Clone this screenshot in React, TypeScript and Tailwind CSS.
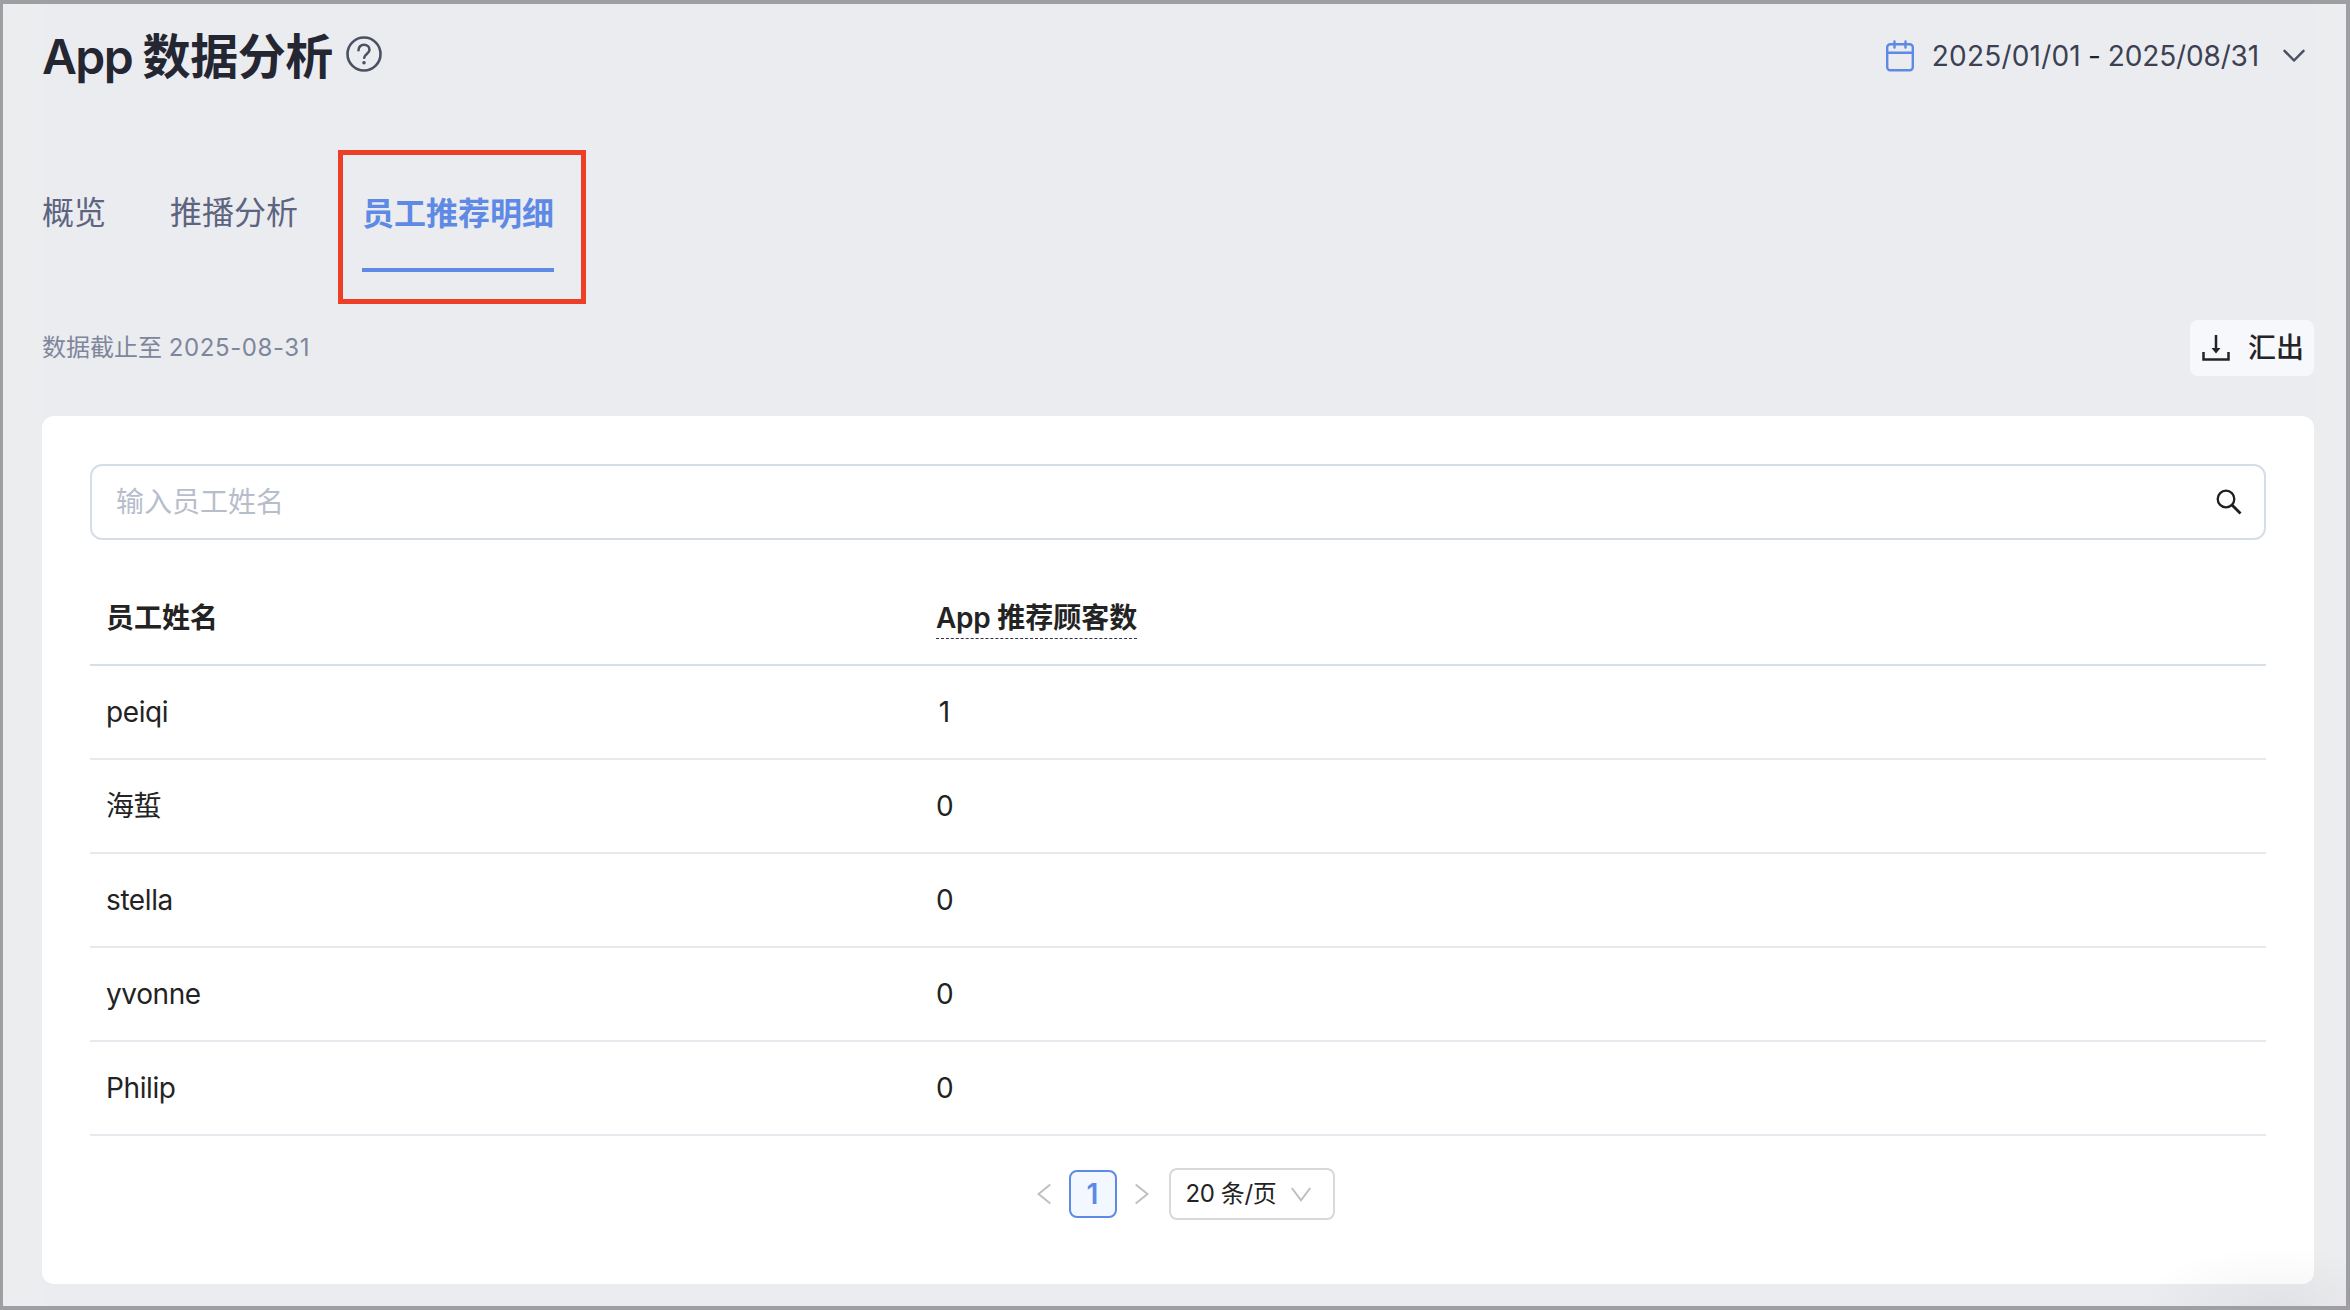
import * as React from 'react'

type Employee = {
  name: string
  customers: number
}

const tabs = ['概览', '推播分析', '员工推荐明细']

const employees: Employee[] = [
  { name: 'peiqi', customers: 1 },
  { name: '海蜇', customers: 0 },
  { name: 'stella', customers: 0 },
  { name: 'yvonne', customers: 0 },
  { name: 'Philip', customers: 0 },
]

function HelpIcon() {
  return (
    <svg className="mb-[4px]" width="36" height="40" viewBox="0 0 36 40" fill="none" stroke="#4a5163" strokeWidth="2.6" strokeLinecap="round">
      <circle cx="18" cy="20" r="16.5" />
      <path d="M12.5 16.2c0-3.2 2.4-5.4 5.5-5.4s5.5 2.1 5.5 5c0 4-5.3 4.2-5.3 8" />
      <circle cx="18" cy="28.7" r="1.8" fill="#4a5163" stroke="none" />
    </svg>
  )
}

function CalendarIcon() {
  return (
    <svg width="28" height="32" viewBox="0 0 28 32" fill="none" stroke="#5e89e4" strokeWidth="2.4" strokeLinecap="round">
      <rect x="1.2" y="4.2" width="25.6" height="26" rx="3" />
      <path d="M1.2 12.8h25.6M8.5 1.5v6M19.5 1.5v6" />
    </svg>
  )
}

function DownloadIcon() {
  return (
    <svg width="28" height="28" viewBox="0 0 28 28" fill="none" stroke="#232328" strokeWidth="2.5">
      <path d="M14 1v14M1.5 18v7.5h25V18" />
      <path d="M9.5 14h9L14 19.5z" fill="#232328" stroke="none" />
    </svg>
  )
}

function SearchIcon() {
  return (
    <svg width="26" height="26" viewBox="0 0 26 26" fill="none" stroke="#1f1f1f" strokeWidth="2.3">
      <circle cx="10" cy="10" r="8.3" />
      <path d="M16 16l8.5 8.5" strokeWidth="2.8" />
    </svg>
  )
}

function Header() {
  return (
    <header className="flex h-[104px] items-center justify-between">
      <div className="flex items-center gap-[13px]">
        <h1 className="pt-[2px] text-[48px] leading-[60px] font-semibold tracking-[-0.4px] text-[#242632]">
          <span className="tracking-[-1.6px]">App </span>数据分析
        </h1>
        <HelpIcon />
      </div>
      <button className="flex items-center pr-[9px] text-[28px] leading-none text-[#3b4152]">
        <CalendarIcon />
        <span className="ml-[18px] tracking-[0.2px]">2025/01/01</span>
        <span className="mr-[7px] ml-[7px] text-[#222]">-</span>
        <span className="tracking-[-0.15px]">2025/08/31</span>
        <svg className="ml-[24px]" width="22" height="14" viewBox="0 0 22 14" fill="none" stroke="#4a5163" strokeWidth="2.5" strokeLinecap="round" strokeLinejoin="round">
          <path d="M1.5 1.8L11 11.5l9.5-9.7" />
        </svg>
      </button>
    </header>
  )
}

function Tabs() {
  return (
    <nav className="mt-[42px] flex h-[154px] items-start">
      {tabs.map((tab, i) =>
        i === tabs.length - 1 ? (
          <div key={tab} className="ml-[-24px] h-[154px] w-[248px] border-[5px] border-[#ec3f25] px-[19px]">
            <button className="h-[117px] w-[192px] border-b-4 border-[#5e89e4] pt-[4px] text-[32px] font-bold whitespace-nowrap text-[#5e89e4]">
              {tab}
            </button>
          </div>
        ) : (
          <button key={tab} className="mr-16 h-[122px] pt-[4px] text-[32px] whitespace-nowrap text-[#5c6480]">
            {tab}
          </button>
        ),
      )}
    </nav>
  )
}

function EmployeeTable() {
  return (
    <div className="mt-8 text-[28px] text-[#232323]">
      <div className="flex h-[94px] items-center border-b-2 border-[#d5dfe7] px-4 font-semibold">
        <div className="w-[830px]">员工姓名</div>
        <div>
          <span className="block border-b border-dashed border-[#2f3547] leading-[40px]">
            <span className="tracking-[-0.3px]">App </span>推荐顾客数
          </span>
        </div>
      </div>
      {employees.map((row) => (
        <div key={row.name} className="flex h-[94px] items-center border-b-2 border-[#e6eaee] px-4">
          <div className="w-[830px] tracking-[-0.4px]">{row.name}</div>
          <div className="w-[17px] text-center">{row.customers}</div>
        </div>
      ))}
    </div>
  )
}

function Pagination() {
  return (
    <div className="mt-8 flex items-center justify-center pl-[15px]">
      <svg width="14" height="22" viewBox="0 0 14 22" fill="none" stroke="#bfbfbf" strokeWidth="2">
        <path d="M13.3 1.5L1.5 11l11.8 9.5" />
      </svg>
      <button className="ml-[18px] flex size-12 items-center justify-center rounded-lg border-2 border-[#5e89e4] bg-[#f3f7ff] text-[28px] font-semibold text-[#5e89e4]">
        1
      </button>
      <svg className="ml-[18px]" width="14" height="22" viewBox="0 0 14 22" fill="none" stroke="#bfbfbf" strokeWidth="2">
        <path d="M.7 1.5L12.5 11L.7 20.5" />
      </svg>
      <button className="ml-[20px] flex h-[52px] w-[166px] items-center justify-between rounded-lg border-2 border-[#d9d9d9] pr-[22px] pl-[15px] text-2xl text-[#232323]">
        <span className="tracking-[-0.4px] whitespace-nowrap">20 条/页</span>
        <svg width="20" height="15" viewBox="0 0 20 15" fill="none" stroke="#bfbfbf" strokeWidth="2">
          <path d="M.8 1L10 13.3L19.2 1" />
        </svg>
      </button>
    </div>
  )
}

export default function App() {
  return (
    <div className="relative h-[1310px] w-[2350px] overflow-hidden border-4 border-l-[3px] border-[#9f9fa3] bg-[#ecedef] pr-8 pl-[39px] font-['Inter','Noto_Sans_CJK_SC',sans-serif]">
      <main className="h-full bg-[#ebecf0]">
        <Header />
        <Tabs />
        <div className="mt-3 flex h-[64px] items-center justify-between">
          <p className="text-2xl text-[#7e869c]">
            数据截止至 <span className="tracking-[0.6px]">2025-08-31</span>
          </p>
          <button className="flex h-14 w-[124px] items-center rounded-lg bg-[#f7f8fc] pl-3 text-[28px] font-medium whitespace-nowrap text-[#232328]">
            <DownloadIcon />
            <span className="ml-[18px]">汇出</span>
          </button>
        </div>
        <section className="mt-[36px] h-[868px] rounded-xl bg-white px-12 pt-12">
          <div className="flex h-[76px] items-center rounded-xl border-2 border-[#d5dee7] pr-[22px] pl-6">
            <input className="flex-1 text-[28px] outline-none placeholder:text-[#b7bdcb]" placeholder="输入员工姓名" />
            <SearchIcon />
          </div>
          <EmployeeTable />
          <Pagination />
        </section>
      </main>
      <div className="pointer-events-none absolute right-[-70px] bottom-[-60px] h-[120px] w-[280px] bg-[radial-gradient(closest-side,rgba(0,0,0,0.045),transparent)]" />
    </div>
  )
}
